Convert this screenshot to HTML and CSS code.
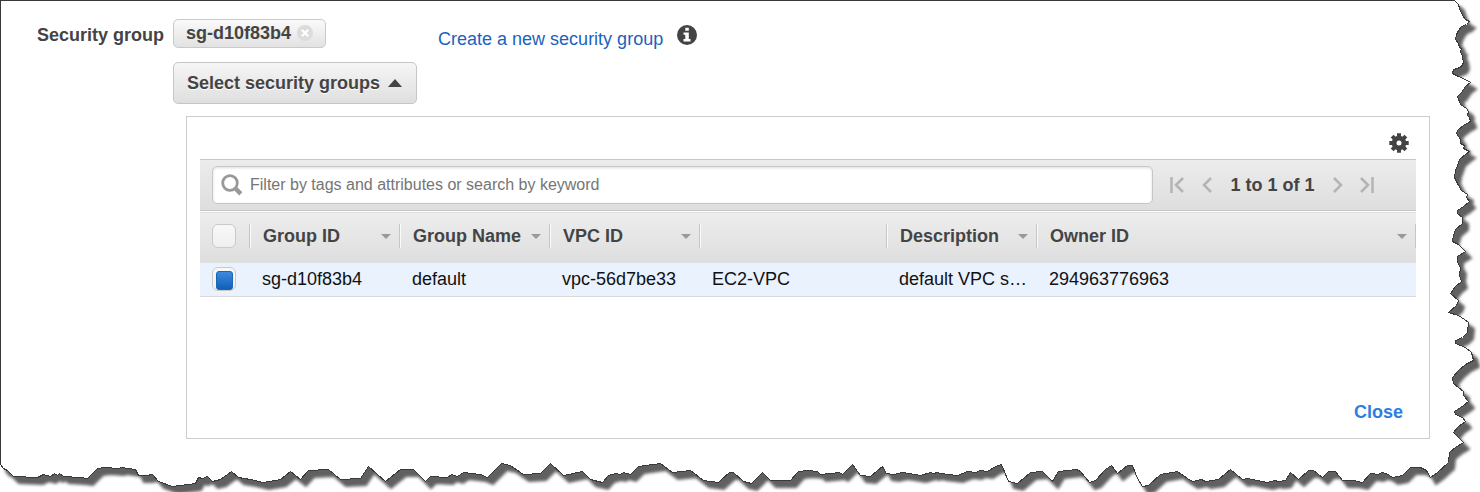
FILE: index.html
```html
<!DOCTYPE html>
<html lang="en">
<head>
<meta charset="utf-8">
<title>Security group</title>
<link rel="stylesheet" href="styles.css">
</head>
<body>
<div class="sheet">
  <svg class="sheet-edge" viewBox="0 0 1480 492" preserveAspectRatio="none" aria-hidden="true">
    <defs>
      <filter id="soft" x="-2%" y="-2%" width="104%" height="106%"><feGaussianBlur stdDeviation="1.6"/></filter>
      <path id="paper" d="M0 0H1454L1458 4L1459 8L1462 15L1465 19L1469 21L1466 24L1461 26L1458 30L1456 34L1455 39L1458 43L1459 47L1461 48L1460 51L1462 56L1463 62L1461 66L1457 68L1453 69L1452 73L1458 76L1465 79L1470 82L1465 86L1461 92L1457 96L1460 104L1466 108L1468 111L1467 115L1469 117L1470 121L1463 125L1457 130L1456 133L1460 139L1460 143L1464 145L1463 148L1469 151L1465 154L1459 159L1457 165L1455 170L1454 177L1457 183L1461 190L1467 194L1466 197L1469 201L1463 206L1457 210L1457 213L1462 217L1462 223L1455 229L1453 235L1452 241L1458 244L1465 251L1457 256L1457 262L1460 267L1459 275L1461 281L1455 286L1450 293L1458 300L1456 305L1448 312L1458 315L1464 319L1468 322L1467 332L1462 337L1455 340L1455 343L1465 347L1471 352L1473 360L1465 364L1458 370L1452 377L1453 383L1458 387L1463 391L1463 395L1468 401L1463 405L1454 411L1455 414L1462 417L1465 421L1458 426L1453 432L1463 442L1455 447L1449 452L1448 462L1437 472L1430 477L1426 470L1420 467L1410 467L1402 475L1392 477L1386 473L1381 472L1378 474L1370 473L1362 482L1353 480L1342 480L1335 471L1328 471L1322 477L1313 470L1308 470L1298 479L1290 472L1285 480L1278 481L1274 480L1267 482L1247 478L1242 479L1230 469L1225 473L1218 479L1205 481L1201 479L1192 481L1187 478L1177 471L1160 474L1148 485L1142 486L1137 478L1132 465L1127 465L1117 473L1111 465L1105 469L1095 480L1089 482L1080 471L1076 469L1058 471L1052 481L1042 471L1030 472L1017 483L1008 481L1001 464L995 466L987 471L979 470L976 472L967 471L957 475L940 473L937 472L933 473L930 472L920 475L902 472L893 474L886 473L882 466L870 476L860 475L852 464L842 474L839 472L820 474L817 471L807 470L798 471L790 480L770 480L762 472L751 483L743 481L733 472L729 472L720 480L718 482L703 480L690 470L672 472L660 463L638 466L630 474L623 472L620 474L615 473L608 475L602 482L590 479L582 471L563 475L550 463L540 473L523 474L510 465L501 463L487 477L480 474L463 472L457 476L451 474L447 477L430 476L425 481L413 469L400 469L385 481L368 466L360 478L340 479L328 469L308 470L300 479L290 471L280 479L263 482L250 479L238 477L231 471L220 479L212 481L207 476L202 478L198 477L195 483L172 486L158 481L152 474L146 475L138 475L135 469L121 467L118 468L104 467L97 468L87 478L79 477L63 476L59 473L57 475L54 473L50 476L43 474L37 477L13 476L7 470L3 468L0 464Z"/>
    </defs>
    <g transform="translate(6 7)"><use href="#paper" class="edge-shadow" filter="url(#soft)"/></g>
    <g transform="translate(.5 .5)"><use href="#paper" class="edge-paper"/></g>
  </svg>

  <main class="content">
    <div class="field">
      <span class="field-label" id="sg-label">Security group</span>
      <div class="field-body">
        <div class="chosen">
          <span class="chip">sg-d10f83b4
            <button class="chip-remove" type="button" aria-label="Remove sg-d10f83b4">
              <svg width="16" height="16" viewBox="0 0 16 16"><circle cx="8" cy="8" r="8" fill="#dcdcdc"/><path d="M4.800 4.800l6.400 6.400M11.200 4.800l-6.400 6.400" stroke="#fff" stroke-width="2.200"/></svg>
            </button>
          </span>
          <a class="create-link" href="#">Create a new security group</a>
          <button class="icon-button info" type="button" aria-label="Information">
            <svg width="20" height="20" viewBox="0 0 20 20"><circle cx="10" cy="10" r="10" fill="#444"/><path d="M8.300 2.800h3.500v3H8.300zM6.500 7.500h5.300v6.500h1.700v2.500h-7V14h1.800v-4.200H6.500z" fill="#fff"/></svg>
          </button>
        </div>
        <button class="select-button" type="button" aria-expanded="true">Select security groups
          <svg width="14" height="8" viewBox="0 0 14 8"><path d="M7 0l7 8H0z" fill="#444"/></svg>
        </button>
      </div>
    </div>

    <section class="panel" aria-labelledby="sg-label">
      <div class="panel-tools">
        <button class="icon-button" type="button" aria-label="Settings">
          <svg width="20" height="20" viewBox="0 0 20 20"><g fill="#444"><circle cx="10" cy="10" r="7.300"/><path id="teeth" d="M8 .3h4v19.400H8zM.3 8h19.400v4H.3z"/><use href="#teeth" transform="rotate(45 10 10)"/></g><circle cx="10" cy="10" r="2.500" fill="#fff"/></svg>
        </button>
      </div>

      <div class="toolbar">
        <label class="search">
          <svg width="22" height="22" viewBox="0 0 22 22" fill="none" stroke="#999" aria-hidden="true"><circle cx="9" cy="9" r="7.300" stroke-width="2.800"/><path d="M14.500 14.500l5.300 5.300" stroke-width="4.500"/></svg>
          <input type="text" aria-label="Filter" placeholder="Filter by tags and attributes or search by keyword">
        </label>
        <nav class="pager" aria-label="Pages">
          <button class="icon-button" type="button" aria-label="First page"><svg width="14" height="16" viewBox="0 0 14 16"><path d="M1.500 0v16M13 1L6 8l7 7"/></svg></button>
          <button class="icon-button prev" type="button" aria-label="Previous page"><svg width="10" height="16" viewBox="0 0 10 16"><path d="M9 1L2 8l7 7"/></svg></button>
          <span class="pager-text">1 to 1 of 1</span>
          <button class="icon-button" type="button" aria-label="Next page"><svg width="10" height="16" viewBox="0 0 10 16"><path d="M1 1l7 7-7 7"/></svg></button>
          <button class="icon-button last" type="button" aria-label="Last page"><svg width="14" height="16" viewBox="0 0 14 16"><path d="M12.500 0v16M1 1l7 7-7 7"/></svg></button>
        </nav>
      </div>

      <table class="groups">
        <colgroup><col class="c-check"><col class="c-std"><col class="c-std"><col class="c-std"><col class="c-type"><col class="c-std"><col></colgroup>
        <thead>
          <tr>
            <th><div class="head"><input class="box" type="checkbox" aria-label="Select all"></div></th>
            <th><div class="head sortable">Group ID</div></th>
            <th><div class="head sortable">Group Name</div></th>
            <th><div class="head sortable">VPC ID</div></th>
            <th><div class="head"></div></th>
            <th><div class="head sortable">Description</div></th>
            <th><div class="head sortable">Owner ID</div></th>
          </tr>
        </thead>
        <tbody>
          <tr>
            <td><input class="box" type="checkbox" aria-label="Select sg-d10f83b4" checked></td>
            <td>sg-d10f83b4</td>
            <td>default</td>
            <td>vpc-56d7be33</td>
            <td>EC2-VPC</td>
            <td>default VPC s…</td>
            <td>294963776963</td>
          </tr>
        </tbody>
      </table>

      <div class="panel-foot"><button class="close" type="button">Close</button></div>
    </section>
  </main>
</div>
</body>
</html>
```
FILE: styles.css
```css
* { box-sizing: border-box; }

body {
  margin: 0;
  background: #fff;
  color: #444;
  font-family: "Liberation Sans", Arial, sans-serif;
  font-size: 18px;
  line-height: 22px;
}

button, input { font: inherit; color: inherit; }
button { margin: 0; padding: 0; border: 0; background: none; cursor: pointer; }
svg { display: block; flex: none; }

.sheet { position: relative; min-height: 100vh; overflow: hidden; }
.sheet-edge { position: absolute; inset: 0; width: 100%; height: 100%; }
.edge-shadow { fill: #606060; stroke: #606060; stroke-width: 2px; }
.edge-paper { fill: #fff; stroke: #3a3a3a; stroke-width: 1px; shape-rendering: crispEdges; }

.content { position: relative; padding: 19px 50px 53px 37px; }

.field { display: flex; gap: 12px; }
.field-label { flex: none; width: 124px; padding-top: 5px; font-weight: bold; white-space: nowrap; }
.chosen { display: flex; align-items: center; height: 32px; }

.chip {
  display: flex;
  align-items: center;
  align-self: flex-start;
  gap: 6px;
  height: 29px;
  padding: 0 12px 2px;
  border: 1px solid #c9c9c9;
  border-radius: 5px;
  background: linear-gradient(#fafafa, #e2e2e2);
  font-weight: bold;
  white-space: nowrap;
}

.create-link { margin-left: 112px; padding-top: 8px; color: #1b62be; text-decoration: none; white-space: nowrap; }
.icon-button { display: flex; }
.info { margin-left: 14px; }

.select-button {
  display: flex;
  align-items: center;
  gap: 8px;
  height: 42px;
  margin-top: 11px;
  padding: 0 14px 0 13px;
  border: 1px solid #c6c6c6;
  border-radius: 5px;
  background: linear-gradient(#f5f5f5, #dfdfdf);
  font-weight: bold;
  text-shadow: 0 1px 0 #fff;
  white-space: nowrap;
}

.panel { margin: 12px 0 0 149px; padding: 0 13px; border: 1px solid #ccc; background: #fff; }
.panel-tools { display: flex; justify-content: flex-end; padding: 16px 7px 6px; }

.toolbar {
  display: flex;
  align-items: center;
  height: 52px;
  padding: 0 0 1px 12px;
  border-top: 1px solid #c6c6c6;
  border-bottom: 1px solid #c6c6c6;
  background: linear-gradient(#ececec, #dedede);
}

.search {
  display: flex;
  flex: 1;
  align-items: center;
  gap: 7px;
  height: 38px;
  padding-left: 8px;
  border: 1px solid #c6c6c6;
  border-radius: 5px;
  background: #fff;
  box-shadow: inset 0 1px 3px #ddd;
}
.search input { flex: 1; min-width: 0; padding: 0; border: 0; outline: 0; background: none; font-size: 16px; }
.search input::placeholder { color: #757575; opacity: 1; }

.pager { display: flex; align-items: center; width: 263px; padding-left: 17px; }
.pager svg { fill: none; stroke: #b4b4b4; stroke-width: 2.5px; }
.prev { margin-left: 18px; }
.pager-text { width: 121px; text-align: center; font-weight: bold; white-space: nowrap; }
.last { margin-left: 17px; }

.groups { width: 100%; border-collapse: collapse; table-layout: fixed; }
.c-check { width: 50px; }
.c-std { width: 150px; }
.c-type { width: 187px; }
.groups th { height: 51px; padding: 0 0 2px; text-align: left; }
.groups thead tr { background: linear-gradient(#ededed, #dedede); border-top: 1px solid #fff; }
.head { display: flex; align-items: center; justify-content: space-between; height: 24px; padding: 0 8px 0 13px; border-right: 1px solid #c6c6c6; box-shadow: 1px 0 #fafafa; white-space: nowrap; }
th:first-child .head { padding-left: 12px; }
th:last-child .head { box-shadow: none; }
.sortable::after { content: ""; border: 5px solid transparent; border-top-color: #999; border-bottom: 0; }

.groups td { height: 34px; padding: 0 6px 0 12px; white-space: nowrap; color: #111; }
.groups tbody tr { background: #eaf2fe; border-bottom: 1px solid #d9d9d9; }

.box {
  display: block;
  flex: none;
  appearance: none;
  width: 24px;
  height: 24px;
  margin: 0;
  border: 1px solid #c9c9c9;
  border-radius: 6px;
  background: linear-gradient(#f8f8f8, #efefef);
}
.box:checked { padding: 3px 2px 2px 3px; }
.box:checked::before { content: ""; display: block; height: 100%; border: 1px solid #1a66ba; border-radius: 3px; background: linear-gradient(#3d8ade, #1060ba); }

.panel-foot { display: flex; justify-content: flex-end; padding: 104px 13px 15px; }
.close { color: #2f7de1; font-weight: bold; }
```
